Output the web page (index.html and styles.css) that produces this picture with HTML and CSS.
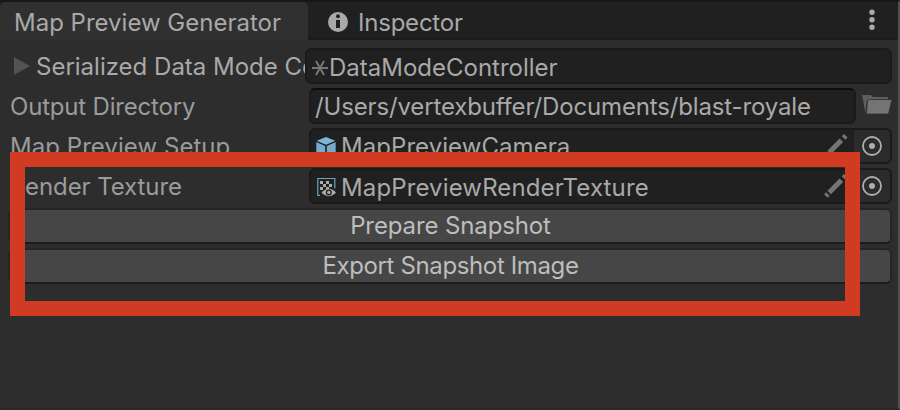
FILE: index.html
```html
<!DOCTYPE html>
<html lang="en">
<head>
<meta charset="utf-8">
<title>Map Preview Generator</title>
<link rel="stylesheet" href="styles.css">
</head>
<body>
<main class="window">
  <header class="tabs">
    <div class="tab active"><span>Map Preview Generator</span></div>
    <div class="tab inspector">
      <svg class="info" viewBox="0 0 20 20"><circle cx="10" cy="10" r="10" fill="#a9a9a9"/><circle cx="10" cy="4.2" r="2" fill="#202020"/><path d="M8 8h4v8H8z" fill="#202020"/></svg>
      <span class="t-insp">Inspector</span>
    </div>
    <svg class="more" viewBox="0 0 6 22"><g fill="#aaa"><circle cx="3" cy="3.2" r="2.7"/><circle cx="3" cy="10.7" r="2.7"/><circle cx="3" cy="18.2" r="2.7"/></g></svg>
  </header>
  <section class="rows">
    <div class="row">
      <div class="label foldout">
        <svg class="arrow" viewBox="0 0 16 18"><path d="M0 0L16 9L0 18z" fill="#535353"/></svg>
        <span>Serialized Data Mode Co</span>
      </div>
      <div class="field wide">
        <svg class="star" viewBox="0 0 18 18"><path d="M1 9h16M5 2l8 14M13 2L5 16" stroke="#757575" stroke-width="2"/></svg>
        <span class="t-dmc">DataModeController</span>
      </div>
    </div>
    <div class="row">
      <div class="label"><span class="t-out">Output Directory</span></div>
      <div class="field path"><span class="t-path">/Users/vertexbuffer/Documents/blast-royale</span></div>
      <svg class="folder" viewBox="0 0 30 20"><path d="M0 0h9l2 2h15v3H5L3.5 18z" fill="#5e5e5e"/><path d="M7.5 4.5H30L26.5 19H4.5L5.5 5.5z" fill="#747474" stroke="#2d2d2d" stroke-width=".8"/></svg>
    </div>
    <div class="row">
      <div class="label"><span class="t-setup">Map Preview Setup</span></div>
      <div class="field">
        <svg class="icon" viewBox="0 0 20 20"><path d="M10 0l9.3 3.7L10 7.7L.7 3.7z" fill="#80b5d8"/><path d="M.3 5L9.2 9v11L.3 16zM19.7 5L10.8 9v11l8.9-4z" fill="#76a9ca"/></svg>
        <span class="t-cam">MapPreviewCamera</span>
        <svg class="pencil" viewBox="0 0 26 28"><path d="M7.2 19.5L19.4 7.2M21.6 5l2.2-2.2M4.2 22.5l2-2" stroke="#747474" stroke-width="5"/></svg>
        <span class="picker"><svg viewBox="0 0 20 20"><circle cx="10" cy="10" r="9" fill="none" stroke="#acacac" stroke-width="1.8"/><circle cx="10" cy="10" r="3" fill="#acacac"/></svg></span>
      </div>
    </div>
    <div class="row">
      <div class="label"><span class="t-rt">Render Texture</span></div>
      <div class="field">
        <svg class="icon" viewBox="0 0 20 20"><path d="M4 18.3H1.8V1.5h17v10" fill="none" stroke="#69a4c2" stroke-width="1.2"/><path d="M4 4h3v3H4zM10 4h3v3h-3zM7 7h3v3H7zM13 7h3v3h-3zM4 10h3v3H4zM10 10h3v2h-3z" fill="#aaa"/><path d="M5.5 15.5Q13 8 20 15.5Q13 23 5.5 15.5z" fill="#aaa"/><circle cx="12.8" cy="15.4" r="3" fill="#202020"/><circle cx="12.8" cy="15.4" r="1.7" fill="#aaa"/></svg>
        <span class="t-mrt">MapPreviewRenderTexture</span>
        <svg class="pencil" viewBox="0 0 26 28"><path d="M7.2 19.5L19.4 7.2M21.6 5l2.2-2.2M3.8 22.9l2-2" stroke="#747474" stroke-width="5"/></svg>
        <span class="picker"><svg viewBox="0 0 20 20"><circle cx="10" cy="10" r="9" fill="none" stroke="#acacac" stroke-width="1.8"/><circle cx="10" cy="10" r="3" fill="#acacac"/></svg></span>
      </div>
    </div>
    <button class="action" type="button"><span class="t-prep">Prepare Snapshot</span></button>
    <button class="action" type="button"><span class="t-exp">Export Snapshot Image</span></button>
  </section>
  <div class="highlight"></div>
</main>
</body>
</html>
```
FILE: styles.css
```css
* { box-sizing: border-box; }
body { margin: 0; background: #2d2d2d; }
.window {
  position: relative;
  width: 900px;
  height: 410px;
  overflow: hidden;
  background: #2d2d2d;
  border-top: 2px solid #171717;
  border-right: 2px solid #505050;
  border-bottom: 2px solid #282626;
  color: #a9a9a9;
  font: 24px/36px Inter, sans-serif;
  white-space: nowrap;
}
.tabs { display: flex; height: 38px; background: #202020; box-shadow: inset 0 -2px #1b1b1b; }
.tab { display: flex; align-items: center; height: 38px; padding-top: 3px; }
.active { width: 308px; padding-left: 14px; background: #303030; border-radius: 5px 5px 0 0; }
.inspector { flex: 1; padding-left: 20px; gap: 10px; }
.info { width: 20px; height: 20px; margin-top: -1px; }
.more { width: 6px; height: 22px; margin: 7px 23px 0 0; }
.rows { display: flex; flex-direction: column; gap: 4px; padding: 8px 6px 0 8px; }
.row { display: flex; height: 36px; }
.label { flex: none; width: 301px; padding: 1px 0 0 2px; color: #9b9b9b; }
.foldout { display: flex; width: 297px; overflow: hidden; padding: 1px 0 0 6px; color: #a9a9a9; }
.arrow { flex: none; width: 16px; height: 18px; margin: 8px 6px 0 0; }
.field {
  display: flex;
  flex: 1;
  align-items: center;
  overflow: hidden;
  padding: 2px 0 0 6px;
  background: #202020;
  border: 2px solid #1a1a1a;
  border-radius: 6px;
}
.wide { padding-left: 4px; }
.star { width: 18px; height: 18px; margin: 1px 0 0; }
.path { flex: none; width: 547px; padding: 1px 0 0 4px; border-top-color: #0d0d0d; }
.folder { width: 30px; height: 20px; margin: 7px 0 0 6px; }
.icon { flex: none; width: 20px; height: 20px; margin: -1px 5px 0 -1px; }
.pencil { flex: none; width: 26px; height: 28px; margin: -1px 6px 0 auto; }
.picker { flex: none; display: flex; align-items: center; width: 36px; height: 34px; margin-top: -2px; padding-left: 8px; background: #2b2b2b; }
.picker svg { width: 20px; height: 20px; }
.action {
  display: flex;
  align-items: center;
  justify-content: center;
  height: 36px;
  margin: 0;
  padding: 0 0 0 1px;
  background: #464646;
  border: 2px solid #252525;
  border-bottom-color: #1c1c1c;
  border-radius: 6px;
  color: #bdbdbd;
  font: inherit;
}
.t-insp { letter-spacing: -.22px; }
.t-out { letter-spacing: -.19px; }
.t-path { letter-spacing: -.15px; }
.t-setup { letter-spacing: .05px; }
.t-rt { letter-spacing: -.08px; }
.t-dmc, .t-cam, .t-mrt { margin-top: 2px; }
.t-cam { margin-top: 0; letter-spacing: .06px; }
.t-mrt { letter-spacing: .13px; }
.t-prep { letter-spacing: -.12px; }
.t-exp { letter-spacing: -.37px; }
.highlight { position: absolute; left: 10px; top: 150px; width: 850px; height: 164px; border: 15px solid #d03b22; }
```
